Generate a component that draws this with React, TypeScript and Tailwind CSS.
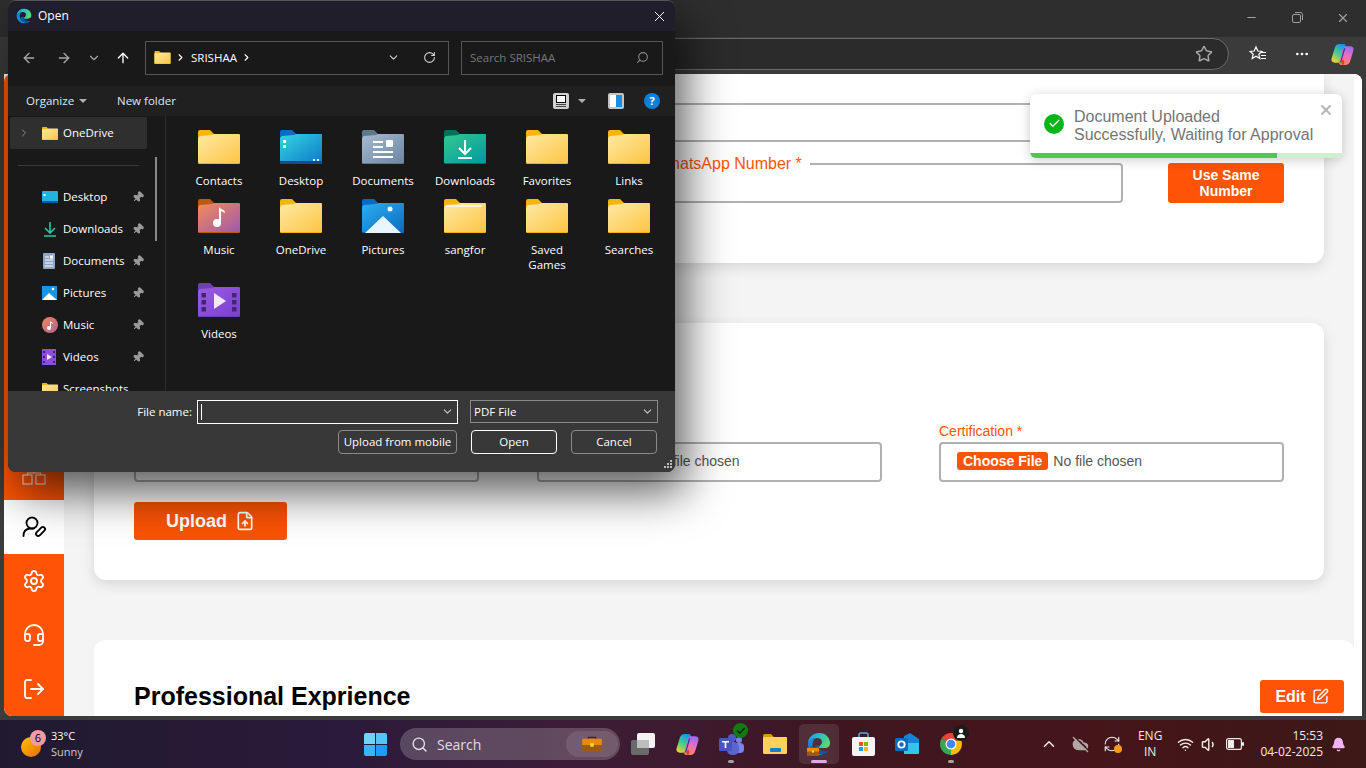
import React from "react";
import {
  ArrowLeft,
  ArrowRight,
  ArrowUp,
  Bell,
  ChevronDown,
  ChevronRight,
  ChevronUp,
  CloudOff,
  FileUp,
  Headset,
  LogOut,
  Minus,
  MoreHorizontal,
  Pin,
  RefreshCw,
  RotateCw,
  Search,
  Settings,
  SquarePen,
  Star,
  Volume1,
  Wifi,
  X,
  Check,
} from "lucide-react";

const FOLDER_KINDS = {
  plain: { tab: "#f5b50f", from: "#ffe9a3", to: "#fcc544" },
  desktop: { tab: "#0b6cc6", from: "#33d6e2", to: "#0f79c9" },
  documents: { tab: "#5f7789", from: "#a6bad2", to: "#6d86a2" },
  downloads: { tab: "#0a6e5c", from: "#34c98e", to: "#0198a2" },
  pictures: { tab: "#0b68c4", from: "#2eaef0", to: "#0b6bbf" },
  music: { tab: "#b95c0f", from: "#f58c58", to: "#9e59ac" },
  videos: { tab: "#6c41b2", from: "#9c5ce2", to: "#7a3fd2" },
};

type FolderKind = keyof typeof FOLDER_KINDS;

function FolderIcon({ kind = "plain", w = 42, h = 34, gid, children }: { kind?: FolderKind; w?: number; h?: number; gid: string; children?: React.ReactNode }) {
  const c = FOLDER_KINDS[kind];
  return (
    <svg width={w} height={h} viewBox="0 0 42 34" className="shrink-0">
      <defs>
        <linearGradient id={gid} x1="0" y1="0" x2="1" y2="1">
          <stop offset="0" stopColor={c.from} />
          <stop offset="1" stopColor={c.to} />
        </linearGradient>
      </defs>
      <path d="M0 2a2 2 0 0 1 2-2h10l4 4h-16z M0 4h16v6h-16z" fill={c.tab} />
      <path d="M1 5h40a1 1 0 0 1 1 1v27a1 1 0 0 1-1 1h-40a1 1 0 0 1-1-1v-24z" fill={c.tab} />
      <path d="M0 9q0-2 2-3l12-1 2-1h25a1 1 0 0 1 1 1v27a1 1 0 0 1-1 1h-40a1 1 0 0 1-1-1z" fill={`url(#${gid})`} />
      {children}
    </svg>
  );
}

function GridFolder({ name, kind }: { name: string; kind: string }) {
  const gid = "grid-" + name.replace(" ", "");
  let extra: React.ReactNode = null;
  if (kind === "desktop") {
    extra = (
      <>
        <rect x="3" y="10" width="3" height="3" fill="#fff" />
        <rect x="3" y="15" width="3" height="3" fill="#fff" />
        <rect x="0" y="31" width="42" height="3" fill="#0a4f90" />
        <rect x="33" y="29" width="2" height="2" fill="#cfe" />
        <rect x="37" y="29" width="2" height="2" fill="#cfe" />
      </>
    );
  }
  if (kind === "documents") {
    extra = (
      <>
        <rect x="11" y="11" width="10" height="2" fill="#fff" />
        <rect x="11" y="16" width="10" height="2" fill="#fff" />
        <rect x="11" y="21" width="20" height="2" fill="#fff" />
        <rect x="11" y="26" width="20" height="2" fill="#fff" />
        <rect x="24" y="10" width="7" height="7" rx="1" fill="#fff" />
      </>
    );
  }
  if (kind === "downloads") {
    extra = (
      <path d="M21 10v14M15 18l6 6 6-6M14 28h14" fill="none" stroke="#fff" strokeWidth="2" />
    );
  }
  if (kind === "pictures") {
    extra = (
      <>
        <circle cx="28" cy="10" r="2.5" fill="#fff" />
        <path d="M3 34l18-17 18 17z" fill="#eaf6ff" />
      </>
    );
  }
  if (kind === "music") {
    extra = (
      <>
        <circle cx="19" cy="24" r="4" fill="#fff" />
        <path d="M21 24v-16c2 3 6 2 6 6-2-1-3-2-4-2v12z" fill="#fff" />
      </>
    );
  }
  if (kind === "videos") {
    extra = (
      <>
        {[10, 17, 24].map(y => (
          <React.Fragment key={y}>
            <rect x="3.5" y={y} width="4.5" height="4.5" fill="#42266f" />
            <rect x="34" y={y} width="4.5" height="4.5" fill="#42266f" />
          </React.Fragment>
        ))}
        <path d="M16 10l12 8-12 8z" fill="#f2e9fb" />
      </>
    );
  }
  if (name === "sangfor") {
    extra = <rect x="2" y="6" width="36" height="2" fill="#f6f3e6" />;
  }
  return (
    <div className="flex flex-col items-center">
      <FolderIcon kind={kind as FolderKind} gid={gid}>
        {extra}
      </FolderIcon>
      <span className="mt-[9px] mb-[11px] w-[70px] text-center leading-[15px]">{name}</span>
    </div>
  );
}

const GRID_ITEMS = [
  { name: "Contacts", kind: "plain" },
  { name: "Desktop", kind: "desktop" },
  { name: "Documents", kind: "documents" },
  { name: "Downloads", kind: "downloads" },
  { name: "Favorites", kind: "plain" },
  { name: "Links", kind: "plain" },
  { name: "Music", kind: "music" },
  { name: "OneDrive", kind: "plain" },
  { name: "Pictures", kind: "pictures" },
  { name: "sangfor", kind: "plain" },
  { name: "Saved Games", kind: "plain" },
  { name: "Searches", kind: "plain" },
  { name: "Videos", kind: "videos" },
];

function NavGlyph({ name }: { name: string }) {
  if (name === "Desktop") {
    return (
      <svg width="16" height="12" viewBox="0 0 16 12">
        <rect width="16" height="12" rx="1" fill="#22b4e0" />
        <rect y="10" width="16" height="2" fill="#0b5f9e" />
        <rect x="1.5" y="3" width="2" height="2" fill="#fff" />
      </svg>
    );
  }
  if (name === "Downloads") {
    return (
      <svg width="16" height="16" viewBox="0 0 16 16">
        <path d="M8 1v10M3 7l5 5 5-5M2 15h12" fill="none" stroke="#2cc4a0" strokeWidth="1.6" />
      </svg>
    );
  }
  if (name === "Documents") {
    return (
      <svg width="14" height="16" viewBox="0 0 14 16">
        <rect width="12" height="16" x="1" rx="1" fill="#8ea7c4" />
        <path d="M3 4h4M3 7h8M3 10h8M3 13h8" stroke="#fff" strokeWidth="1" />
        <rect x="8" y="2.5" width="3" height="3" fill="#fff" />
      </svg>
    );
  }
  if (name === "Pictures") {
    return (
      <svg width="15" height="14" viewBox="0 0 15 14">
        <rect width="15" height="14" fill="#1c94e2" />
        <circle cx="11" cy="3" r="1.3" fill="#fff" />
        <path d="M0 14l7-7 8 7z" fill="#fff" />
      </svg>
    );
  }
  if (name === "Music") {
    return (
      <svg width="16" height="16" viewBox="0 0 16 16">
        <defs>
          <linearGradient id="nav-music" x1="0" y1="0" x2="1" y2="1">
            <stop offset="0" stopColor="#ee8a55" />
            <stop offset="1" stopColor="#b0609c" />
          </linearGradient>
        </defs>
        <circle cx="8" cy="8" r="8" fill="url(#nav-music)" />
        <circle cx="7" cy="11" r="2" fill="#fff" />
        <path d="M8 11V4c1 1.5 3 1 3 3-1-.5-1.500-1-2-1v5z" fill="#fff" />
      </svg>
    );
  }
  if (name === "Videos") {
    return (
      <svg width="14" height="16" viewBox="0 0 14 16">
        <rect width="14" height="16" fill="#8c4fdc" />
        <path d="M1 2h2v2H1zM1 7h2v2H1zM1 12h2v2H1zM11 2h2v2h-2zM11 7h2v2h-2zM11 12h2v2h-2z" fill="#3f2470" />
        <path d="M5 5l5 3-5 3z" fill="#f2e9fb" />
      </svg>
    );
  }
  return <FolderIcon w={16} h={13} gid={"nav-" + name} />;
}

function NavRow({ name }: { name: string }) {
  return (
    <div className="flex h-8 shrink-0 items-center pl-[34px]">
      <span className="flex w-[21px] justify-start">
        <NavGlyph name={name} />
      </span>
      <span className="w-[69px]">{name}</span>
      {name !== "Screenshots" && <Pin size={12} className="rotate-45 fill-[#9a9a9a] text-[#9a9a9a]" />}
    </div>
  );
}

function EdgeLogo({ size, gid }: { size: number; gid: string }) {
  return (
    <svg width={size} height={size} viewBox="0 0 24 24" className="shrink-0">
      <defs>
        <linearGradient id={gid} x1="0" y1="0.4" x2="1" y2="0.6">
          <stop offset="0" stopColor="#1b9de2" />
          <stop offset="0.5" stopColor="#2cc3c0" />
          <stop offset="1" stopColor="#5fdc6c" />
        </linearGradient>
      </defs>
      <path d="M1 12C1 5 6 1 12 1c7 0 11 5 11 10 0 3-2 5-5 5h-6c0-3 3-3 3-6 0-3-3-4.500-6-4-4 .7-7 3-8 6z" fill={`url(#${gid})`} />
      <path d="M1 12c1-3 4-6 8-6-3 2-4 5-3 9 1 4 5 7 10 7-1 .6-3 1-4 1C6 23 1 18 1 12z" fill="#1585d8" />
      <path d="M6 15c1 4 5 7 10 7 2 0 4-1 6-3-3 1-6 1-8-1-2-1-3-3-2-5-3 0-5 1-6 2z" fill="#0e5aa6" />
    </svg>
  );
}

function Briefcase({ w = 22, h = 16 }: { w?: number; h?: number }) {
  return (
    <svg width={w} height={h} viewBox="0 0 22 18" className="shrink-0">
      <path d="M7 4V1.500h8V4" fill="none" stroke="#3a2a18" strokeWidth="1.500" />
      <rect y="3" width="22" height="8" rx="1" fill="#ec8a06" />
      <rect y="10" width="22" height="8" rx="1" fill="#9a5a12" />
      <rect x="9" y="8" width="4" height="4" fill="#f6d33c" />
    </svg>
  );
}

function CopilotLogo({ size, gid }: { size: number; gid: string }) {
  return (
    <svg width={size} height={size} viewBox="0 0 24 24" className="shrink-0">
      <defs>
        <linearGradient id={gid + "-a"} x1="0.7" y1="0" x2="0.2" y2="1">
          <stop offset="0" stopColor="#1b8ef2" />
          <stop offset="0.5" stopColor="#3fcf8e" />
          <stop offset="1" stopColor="#f6d02e" />
        </linearGradient>
        <linearGradient id={gid + "-b"} x1="0.7" y1="0" x2="0.3" y2="1">
          <stop offset="0" stopColor="#9a6cf0" />
          <stop offset="0.5" stopColor="#f06cc0" />
          <stop offset="1" stopColor="#fb8a4a" />
        </linearGradient>
      </defs>
      <path d="M9 1h4c2 0 3 1.500 2.500 3.500L12 17c-.7 2.500-2 3.500-4.500 3.500H4c-2.500 0-4-1.500-3.500-4L4 5c.7-2.500 2.500-4 5-4z" fill={`url(#${gid}-a)`} />
      <path d="M15 23h-4c-2 0-3-1.500-2.500-3.500L12 7c.7-2.500 2-3.500 4.500-3.500H20c2.500 0 4 1.500 3.500 4L20 19c-.7 2.500-2.500 4-5 4z" fill={`url(#${gid}-b)`} />
      <path d="M13.500 5.500L10 18c-.4 1.500-1.200 2.300-2 2.500 1.500.3 2.600-.5 3.200-2.500L15 5.500z" fill="#1c3fa8" />
      <path d="M10.500 18.500c-.2 1.500.2 3.300 1.500 4.500 1.500 0 2-2 2-3l-1-3z" fill="#e0402c" />
    </svg>
  );
}

function TaskbarApp({ children, active, dot }: { children: React.ReactNode; active?: boolean; dot?: boolean }) {
  return (
    <div className={active ? "relative flex h-10 w-10 items-center justify-center rounded-[5px] bg-white/10" : "relative flex h-10 w-10 items-center justify-center"}>
      {children}
      {dot && <span className="absolute bottom-[1px] left-[17px] h-[3px] w-[6px] rounded-full bg-[#a8a0a0]" />}
      {active && <span className="absolute bottom-[1px] left-3 h-[3px] w-4 rounded-full bg-[#e6a6e6]" />}
    </div>
  );
}

function FileField({ label }: { label?: string }) {
  return (
    <div className="flex flex-col">
      <label className="h-[18px] text-[14px] leading-[14px] text-[#ff5405]">{label ?? "\u00a0"}</label>
      <div className="flex h-10 items-center rounded-[4px] border-2 border-[#b1b1b1] pb-[2px] pl-4 text-[14px] text-[#555]">
        <span className="mr-[5px] rounded-[3px] bg-[#ff5405] px-[6px] text-[14px] leading-[18px] font-bold text-white">Choose File</span>
        No file chosen
      </div>
    </div>
  );
}

function SideItem({ children, active }: { children: React.ReactNode; active?: boolean }) {
  return <div className={active ? "flex h-[54px] items-center justify-center bg-white text-black" : "flex h-[54px] items-center justify-center text-white"}>{children}</div>;
}

export default function App() {
  return (
    <div className="relative flex h-[768px] w-[1366px] flex-col overflow-hidden bg-[#3b3b3b] font-['Liberation_Sans',sans-serif]">
      {/* Browser chrome */}
      <div className="flex h-[37px] shrink-0 items-center justify-end bg-[#2e2e2e] pb-[2px] text-[#a0a0a0]">
        <span className="flex w-[46px] justify-center"><Minus size={13} /></span>
        <span className="flex w-[46px] justify-center">
          <svg width="11" height="11" viewBox="0 0 11 11" fill="none" stroke="currentColor">
            <rect x="0.5" y="2.500" width="8" height="8" rx="1.500" />
            <path d="M3 .5h5.500a2 2 0 0 1 2 2V8" />
          </svg>
        </span>
        <span className="flex w-[46px] justify-center"><X size={14} /></span>
      </div>
      <div className="flex h-[37px] shrink-0 items-center bg-[#3b3b3b] pb-[3px]">
        <div className="ml-[300px] flex h-8 w-[929px] items-center justify-end rounded-r-full border border-[#6a6a6a] bg-[#2b2b2b] pr-[15px]">
          <Star size={18} className="text-[#a8a8a8]" />
        </div>
        <span className="ml-[20px] flex w-[18px] justify-center">
          <svg width="18" height="18" viewBox="0 0 18 18" fill="none" stroke="#fff" strokeWidth="1.200">
            <path d="M7 2l1.800 4 4.200.4-3.200 2.800 1 4.300L7 11.300 3.200 13.500l1-4.300L1 6.400 5.200 6z" />
            <path d="M12 7.500h5M12 10.500h5M12 13.500h5" />
          </svg>
        </span>
        <MoreHorizontal size={16} className="ml-[27px] text-white" />
        <span className="ml-[21px]"><CopilotLogo size={23} gid="browser-copilot" /></span>
      </div>

      {/* Page */}
      <div className="mx-1 flex h-[642px] shrink-0 overflow-hidden rounded-tr-lg rounded-bl-lg bg-white">
        <div className="flex w-[60px] shrink-0 flex-col justify-end rounded-tl-lg bg-[#ff5405]">
          <SideItem>
            <svg width="24" height="26" viewBox="0 0 24 26" fill="none" stroke="#fff" strokeWidth="1.200" className="mb-[2px] opacity-80">
              <rect x="1" y="16" width="9" height="9" />
              <rect x="14" y="16" width="9" height="9" />
              <rect x="8" y="4" width="8" height="8" />
              <path d="M12 12v2M5.500 16v-2h13v2" />
            </svg>
          </SideItem>
          <SideItem active>
            <svg width="25" height="24" viewBox="0 0 25 24" fill="none" stroke="#000" strokeWidth="1.800" strokeLinecap="round" className="mr-[-1px]">
              <circle cx="10" cy="8" r="5.500" />
              <path d="M1.500 21c0-4.500 2.500-7 6-7.500 1.500.2 3 .2 4.500-.2" />
              <rect x="-2.200" y="-5.500" width="4.400" height="11" rx="2.200" transform="translate(18.500 16.500) rotate(45)" />
            </svg>
          </SideItem>
          <SideItem><Settings size={24} strokeWidth={1.8} /></SideItem>
          <SideItem><Headset size={24} strokeWidth={1.8} /></SideItem>
          <SideItem><LogOut size={24} strokeWidth={1.8} /></SideItem>
        </div>
        <div className="flex w-[1290px] shrink-0 flex-col gap-[60px] bg-[#f4f4f4] pl-[30px]">
          <section className="h-[189px] w-[1230px] shrink-0 rounded-b-xl bg-white px-10 pt-[29px] shadow-[0_4px_14px_rgba(0,0,0,0.12)]">
            <div className="ml-[403px] h-[39px] rounded-[4px] border-2 border-[#b1b1b1]" />
            <div className="mt-3 flex items-end justify-between">
              <fieldset className="ml-[403px] h-[49px] w-[586px] rounded-[4px] border-2 border-[#b1b1b1]">
                <legend className="ml-[109px] px-2 text-[16px] leading-[20px] text-[#ff5405]">WhatsApp Number *</legend>
              </fieldset>
              <button className="flex h-10 w-[116px] items-center justify-center rounded-[3px] bg-[#ff5405] text-[14px] leading-4 font-bold text-white">
                Use Same<br />Number
              </button>
            </div>
          </section>

          <section className="h-[257px] w-[1230px] shrink-0 rounded-xl bg-white px-10 pt-[101px] shadow-[0_4px_14px_rgba(0,0,0,0.12)]">
            <div className="grid grid-cols-3 gap-x-[57.5px]">
              <FileField />
              <FileField />
              <FileField label="Certification *" />
            </div>
            <button className="mt-5 flex h-[38px] w-[153px] items-center justify-center gap-2 rounded-[3px] bg-[#f95305] text-[18px] font-bold text-white">
              Upload <FileUp size={20} />
            </button>
          </section>

          <section className="flex h-[100px] w-[1260px] shrink-0 items-start justify-between rounded-t-xl bg-white pt-10 pl-10">
            <h2 className="text-[25px] leading-8 font-bold text-black">Professional Exprience</h2>
            <button className="mr-[10px] flex h-[33px] w-[84px] items-center justify-center gap-[6px] rounded-[3px] bg-[#ff5405] text-[16px] font-bold text-white">
              Edit <SquarePen size={17} />
            </button>
          </section>
        </div>
        <div className="flex-1 bg-white" />
      </div>

      {/* Taskbar */}
      <div className="mt-1 flex h-12 shrink-0 items-center bg-[linear-gradient(90deg,#201a30_0%,#2b1a3a_25%,#3c1d38_42%,#3f1620_62%,#45151a_80%,#3c1817_100%)] text-white">
        <div className="flex w-[353px] shrink-0 items-center pl-[21px] font-['Open_Sans',sans-serif] text-[11px] leading-[16px]">
          <div className="relative mt-[6px] h-5 w-5 rounded-full bg-[linear-gradient(135deg,#ffc400,#e86a00)]">
            <span className="absolute top-[-7px] left-[9px] flex h-4 w-4 items-center justify-center rounded-full bg-[#f498a8] text-[11px] text-black">6</span>
          </div>
          <div className="ml-[10px]">
            <div>33°C</div>
            <div className="text-[#cfc8d4]">Sunny</div>
          </div>
        </div>
        <div className="flex w-[44px] shrink-0 justify-center">
          <div className="grid h-[23px] w-[23px] grid-cols-2 gap-[1px]">
            <span className="rounded-tl-[2px] bg-[#6fd4fa]" />
            <span className="rounded-tr-[2px] bg-[#52c4f8]" />
            <span className="rounded-bl-[2px] bg-[#38b4f8]" />
            <span className="rounded-br-[2px] bg-[#1c9cf4]" />
          </div>
        </div>
        <div className="mr-[3px] ml-[3px] flex h-8 w-[220px] shrink-0 items-center rounded-full bg-white/20 pl-[11px] font-['Open_Sans',sans-serif] text-[14px] text-[#e4dce4]">
          <Search size={17} className="mr-[9px]" />
          Search
          <span className="ml-auto mr-[2px] flex h-[26px] w-[52px] items-center justify-center rounded-full bg-white/10">
            <Briefcase />
          </span>
        </div>
        <TaskbarApp>
          <svg width="24" height="22" viewBox="0 0 24 22">
            <rect x="0" y="7" width="18" height="15" rx="2" fill="#6a6a6a" />
            <rect x="6" y="0" width="18" height="15" rx="2" fill="#f2f2f2" />
            <rect x="6" y="7" width="12" height="8" fill="#bdbdbd" />
          </svg>
        </TaskbarApp>
        <span className="w-1" />
        <TaskbarApp><CopilotLogo size={23} gid="taskbar-copilot" /></TaskbarApp>
        <span className="w-1" />
        <TaskbarApp dot>
          <svg width="25" height="22" viewBox="0 0 25 22">
            <circle cx="20" cy="7" r="3" fill="#7b83eb" />
            <rect x="13" y="10" width="12" height="10" rx="4" fill="#7b83eb" />
            <circle cx="13" cy="5" r="4" fill="#5059c9" />
            <rect x="8" y="9" width="12" height="13" rx="5" fill="#5b64d0" />
            <rect x="0" y="5" width="13" height="13" rx="1.500" fill="#4b53bc" />
            <path d="M3 8h7v1.500H7.300V15H5.700V9.500H3z" fill="#fff" />
          </svg>
          <span className="absolute top-[-1px] left-[22px] flex h-[15px] w-[15px] items-center justify-center rounded-full bg-[#107c10]">
            <Check size={10} strokeWidth={3} className="text-[#111]" />
          </span>
        </TaskbarApp>
        <span className="w-1" />
        <TaskbarApp>
          <svg width="24" height="20" viewBox="0 0 24 20">
            <path d="M0 2a2 2 0 0 1 2-2h6l3 3h13v3H0z" fill="#d99a0c" />
            <rect y="3" width="24" height="17" rx="1.500" fill="#fcd05c" />
            <rect x="7" y="14" width="11" height="4" rx="1" fill="#1b7fc4" />
          </svg>
        </TaskbarApp>
        <span className="w-1" />
        <TaskbarApp active>
          <EdgeLogo size={24} gid="taskbar-edge" />
          <span className="absolute top-[22px] left-2"><Briefcase w={12} h={10} /></span>
        </TaskbarApp>
        <span className="w-1" />
        <TaskbarApp>
          <svg width="23" height="24" viewBox="0 0 23 24">
            <path d="M7 7V3a2 2 0 0 1 2-2h5a2 2 0 0 1 2 2v4" fill="none" stroke="#38b6e8" strokeWidth="1.500" />
            <rect y="5" width="23" height="19" rx="2" fill="#f4f4f4" />
            <rect x="7" y="10" width="4" height="4" fill="#f25022" />
            <rect x="12" y="10" width="4" height="4" fill="#7fba00" />
            <rect x="7" y="15" width="4" height="4" fill="#00a4ef" />
            <rect x="12" y="15" width="4" height="4" fill="#ffb900" />
          </svg>
        </TaskbarApp>
        <span className="w-1" />
        <TaskbarApp>
          <svg width="24" height="22" viewBox="0 0 24 22">
            <path d="M9 3l6-3 9 6v14a1 1 0 0 1-1 1H9z" fill="#1384d8" />
            <path d="M9 10h15v10a1 1 0 0 1-1 1H9z" fill="#34c4ee" />
            <rect x="0" y="5" width="13" height="13" rx="1.500" fill="#0f6cbd" />
            <circle cx="6.500" cy="11.500" r="3.200" fill="none" stroke="#fff" strokeWidth="1.800" />
          </svg>
        </TaskbarApp>
        <span className="w-1" />
        <TaskbarApp dot>
          <svg width="24" height="24" viewBox="0 0 24 24">
            <path d="M12 12L2.500 6.500A11 11 0 0 1 21.500 6.500z" fill="#ea4335" />
            <path d="M12 12L21.500 6.500A11 11 0 0 1 12 23z" fill="#fbbc05" />
            <path d="M12 12L12 23A11 11 0 0 1 2.500 6.500z" fill="#34a853" />
            <circle cx="12" cy="12" r="5.500" fill="#fff" />
            <circle cx="12" cy="12" r="4.300" fill="#4285f4" />
          </svg>
          <span className="absolute top-[1px] left-[22px] flex h-4 w-4 items-center justify-center rounded-full bg-[#1b1b1b]">
            <svg width="10" height="10" viewBox="0 0 10 10" fill="#fff">
              <circle cx="5" cy="3" r="2.200" />
              <path d="M1 10c0-3 2-4 4-4s4 1 4 4z" />
            </svg>
          </span>
        </TaskbarApp>

        <div className="ml-auto flex items-center pr-5 font-['Open_Sans',sans-serif] text-[12px] text-[#f0eaea]">
          <ChevronUp size={18} className="mr-[14px]" />
          <CloudOff size={17} className="mr-[14px] fill-[#b0a8a8] text-[#b0a8a8]" />
          <span className="relative mr-[17px] flex">
            <RefreshCw size={18} strokeWidth={1.5} />
            <span className="absolute right-[-1px] bottom-0 h-2 w-2 rounded-full bg-[#f79a1c]" />
          </span>
          <div className="mr-[15px] text-center leading-[16px]">
            <div>ENG</div>
            <div>IN</div>
          </div>
          <Wifi size={17} className="mr-[7px]" />
          <Volume1 size={17} className="mr-[8px]" />
          <svg width="18" height="12" viewBox="0 0 18 12" fill="none" className="mr-[16px]">
            <rect x="0.600" y="0.600" width="14.800" height="10.800" rx="2" stroke="#f0eaea" strokeWidth="1.200" />
            <rect x="2" y="2" width="6" height="8" rx="0.500" fill="#f0eaea" />
            <rect x="16" y="4" width="2" height="4" rx="1" fill="#f0eaea" />
          </svg>
          <div className="text-right leading-[16px]">
            <div>15:53</div>
            <div>04-02-2025</div>
          </div>
          <Bell size={15} className="ml-2 fill-[#f0b4f0] text-[#f0b4f0]" />
        </div>
      </div>

      {/* Toast */}
      <div className="absolute top-[94px] left-[1030px] flex h-16 w-[312px] flex-col overflow-hidden rounded-[6px] bg-white shadow-[0_2px_12px_rgba(0,0,0,0.2)]">
        <div className="relative flex flex-1 items-center pl-[14px]">
          <span className="mr-[10px] flex h-5 w-5 items-center justify-center rounded-full bg-[#07b41a]">
            <Check size={13} strokeWidth={2.5} className="text-white" />
          </span>
          <p className="mt-[5px] text-[16px] leading-[18px] text-[#757575]">Document Uploaded<br />Successfully, Waiting for Approval</p>
          <X size={16} strokeWidth={3} className="absolute top-2 right-2 text-[#b5b5b5]" />
        </div>
        <div className="flex h-[5px]">
          <span className="w-[247px] bg-[#4bcb4b]" />
          <span className="flex-1 bg-[#cdf0d0]" />
        </div>
      </div>

      {/* File dialog */}
      <div className="absolute top-0 left-2 flex h-[472px] w-[667px] flex-col overflow-hidden rounded-lg border-t border-[#555] bg-[#191919] font-['Open_Sans',sans-serif] text-[11.5px] text-white shadow-[10px_20px_45px_rgba(0,0,0,0.65)]">
        <div className="flex h-[30px] shrink-0 items-center bg-[#201e2b] pl-2">
          <EdgeLogo size={16} gid="dialog-edge" />
          <span className="ml-[6px] text-[12px]">Open</span>
          <X size={17} strokeWidth={1.4} className="ml-auto mr-[7px]" />
        </div>

        <div className="flex h-[55px] shrink-0 items-center pb-[2px]">
          <ArrowLeft size={16} className="ml-[13px] text-[#a8a8a8]" />
          <ArrowRight size={16} className="ml-[19px] text-[#a8a8a8]" />
          <ChevronDown size={14} className="ml-[15px] text-[#a8a8a8]" />
          <ArrowUp size={16} className="ml-[14px]" />
          <div className="ml-[14px] flex h-[34px] w-[304px] items-center border border-[#555] pl-2">
            <FolderIcon w={17} h={13} gid="crumb-folder" />
            <ChevronRight size={11} strokeWidth={2.5} className="ml-1" />
            <span className="ml-[5px]">SRISHAA</span>
            <ChevronRight size={11} strokeWidth={2.5} className="ml-[4px]" />
            <ChevronDown size={13} className="ml-auto text-[#cfcfcf]" />
            <RotateCw size={13} className="mr-[12px] ml-[23px] text-[#cfcfcf]" />
          </div>
          <div className="ml-3 flex h-[34px] w-[202px] items-center justify-between border border-[#555] px-2 text-[#777]">
            Search SRISHAA
            <Search size={13} className="mr-[5px] scale-x-[-1] text-[#8a8a8a]" />
          </div>
        </div>

        <div className="flex h-[30px] shrink-0 items-center bg-[#202020] pl-[18px]">
          <span className="w-[47px] text-[#dfe8f2]">Organize</span>
          <span className="ml-[6px] h-0 w-0 border-x-[4px] border-t-[4px] border-x-transparent border-t-[#b0b0b0]" />
          <span className="ml-[30px] text-[#dfe8f2]">New folder</span>
          <span className="ml-auto flex h-4 w-4 flex-col items-center justify-center rounded-[2px] bg-[#d0d0d0]">
            <span className="h-[8px] w-[10px] border border-black bg-white" />
            <span className="mt-px h-[3px] w-[10px] border-y border-[#444]" />
          </span>
          <span className="ml-[9px] h-0 w-0 border-x-[4px] border-t-[4px] border-x-transparent border-t-[#b0b0b0]" />
          <span className="ml-[22px] flex h-4 w-4 overflow-hidden rounded-[2px] border-2 border-[#c4c4c4] bg-white">
            <span className="ml-[6px] flex-1 bg-[#1a8ee0]" />
          </span>
          <span className="ml-5 flex h-4 w-4 items-center justify-center rounded-full bg-[#0f80d8] text-[11px] font-bold">?</span>
          <span className="w-[15px]" />
        </div>

        <div className="flex h-[275px] shrink-0 overflow-hidden">
          <div className="relative flex w-[158px] shrink-0 flex-col border-r border-[#2c2c2c]">
            <div className="mx-[2px] mt-[1px] flex h-8 w-[137px] shrink-0 items-center rounded-[2px] bg-[#2f2f2f] pl-[8px]">
              <ChevronRight size={12} className="text-[#8a8a8a]" />
              <span className="ml-[12px]"><FolderIcon w={16} h={13} gid="nav-onedrive" /></span>
              <span className="ml-[5px]">OneDrive</span>
            </div>
            <div className="mt-4 ml-[10px] h-px w-[121px] shrink-0 bg-[#3a3a3a]" />
            <div className="mt-[15px] flex flex-col">
              {["Desktop", "Downloads", "Documents", "Pictures", "Music", "Videos", "Screenshots"].map(n => (
                <NavRow key={n} name={n} />
              ))}
            </div>
            <span className="absolute top-[41px] left-[147px] h-[84px] w-[2px] bg-[#8a8a8a]" />
          </div>
          <div className="grid flex-1 grid-cols-[repeat(6,82px)] content-start pt-[14px] pl-[12px]">
            {GRID_ITEMS.map(item => (
              <GridFolder key={item.name} name={item.name} kind={item.kind} />
            ))}
          </div>
        </div>

        <div className="relative flex h-[81px] flex-col gap-[7px] bg-[#383838] pt-[9px]">
          <div className="flex h-[23px] items-center">
            <span className="w-[184px] text-right">File name:</span>
            <div className="ml-[5px] flex h-[24px] w-[261px] items-center justify-between border border-white pr-[3px] pl-[3px]">
              <span className="h-4 w-px bg-white" />
              <ChevronDown size={13} className="text-[#c8c8c8]" />
            </div>
            <div className="ml-3 flex h-[23px] w-[188px] items-center justify-between border border-[#8a8a8a] pr-[3px] pl-[3px]">
              PDF File
              <ChevronDown size={13} className="text-[#c8c8c8]" />
            </div>
          </div>
          <div className="flex h-6 items-center">
            <button className="ml-[330px] h-6 w-[119px] rounded-[4px] border border-[#8a8a8a] text-center">Upload from mobile</button>
            <button className="ml-[14px] h-6 w-[86px] rounded-[4px] border border-white text-center">Open</button>
            <button className="ml-[14px] h-6 w-[86px] rounded-[4px] border border-[#8a8a8a] text-center">Cancel</button>
          </div>
          <svg width="10" height="10" viewBox="0 0 10 10" fill="#bdbdbd" className="absolute right-[2px] bottom-[2px]">
            <path d="M7 0h2v2H7zM4 3h2v2H4zM7 3h2v2H7zM1 6h2v2H1zM4 6h2v2H4zM7 6h2v2H7z" />
          </svg>
        </div>
      </div>
    </div>
  );
}
